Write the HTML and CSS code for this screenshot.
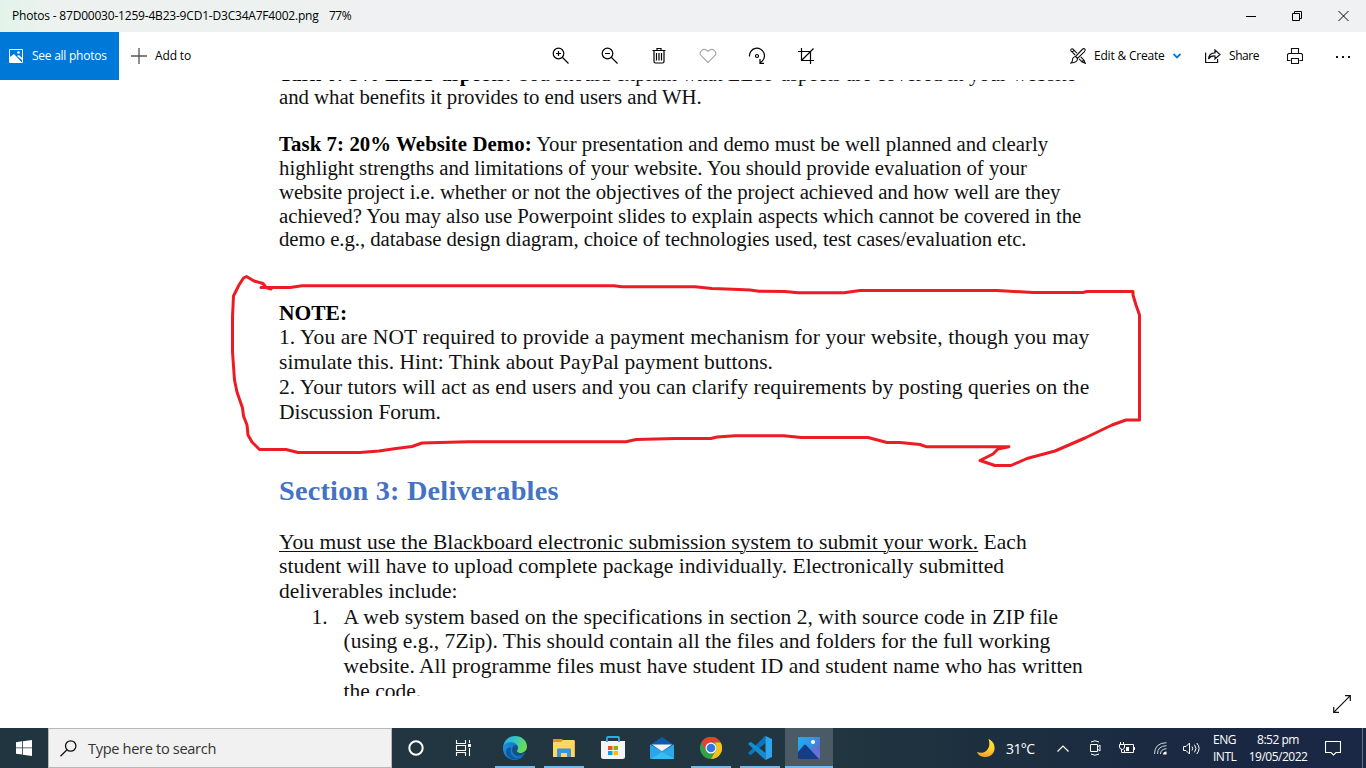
FILE: index.html
```html
<!DOCTYPE html>
<html lang="en">
<head>
<meta charset="utf-8">
<title>Photos</title>
<link rel="stylesheet" href="styles.css">
</head>
<body>
<div class="desktop">
  <header class="titlebar">
    <span class="title name">Photos - 87D00030-1259-4B23-9CD1-D3C34A7F4002.png</span>
    <span class="title pct">77%</span>
    <svg class="winctl" width="138" height="32" viewBox="0 0 138 32" fill="none" stroke="#000"><path d="M18 16.500h10"/><path d="M64.500 13.500h7v7h-7zM66.500 13.500v-2h7v7h-2"/><path d="M110.500 11l10 10m0-10l-10 10"/></svg>
  </header>
  <nav class="toolbar">
    <div class="all">
      <svg width="14" height="14" viewBox="0 0 14 14"><path d="M.5.5h13v13H.5z" fill="none" stroke="#fff"/><path d="M1 8l4-3 8 8.500H1z" fill="#fff"/><path d="M8 7l2-1 3 3v2z" fill="#fff"/><circle cx="9.500" cy="3.500" r="1.300" fill="#fff"/></svg>
      <span class="ui seeall">See all photos</span>
    </div>
    <div class="add">
      <svg width="16" height="16" viewBox="0 0 16 16" stroke="#555" stroke-width="1.300"><path d="M0 8h16M8 0v16"/></svg>
      <span class="ui addto">Add to</span>
    </div>
    <div class="tools">
      <svg viewBox="0 0 18 18"><circle cx="6.500" cy="6.500" r="5.300"/><path d="M4 6.500h5M6.500 4v5M10.500 10.500l6 6"/></svg>
      <svg viewBox="0 0 18 18"><circle cx="6.500" cy="6.500" r="5.300"/><path d="M4 6.500h5M10.500 10.500l6 6"/></svg>
      <svg viewBox="0 0 18 18"><path d="M2.500 3.500h13M4 3.500v11q0 1.500 1.500 1.500h7q1.500 0 1.500-1.500v-11M7 3.500v-2h4v2M6.500 6v7.500M9 6v7.500M11.500 6v7.500"/></svg>
      <svg viewBox="0 0 18 18" class="dim"><path d="M9 15.500L2.200 8.700C-.6 5.500 3.600-.2 9 4.200c5.400-4.400 9.600 1.300 6.800 4.500z"/></svg>
      <svg viewBox="0 0 18 18"><path d="M1.500 9.500a7.500 7.500 0 1 1 10.700 6M12 12v4.300h4" /><circle cx="9" cy="9" r="1.500"/></svg>
      <svg viewBox="0 0 18 18"><path d="M1 4.500h12.500V17M4.500 1v12.500H17M4.500 13.500L16.500 1.500"/></svg>
    </div>
    <div class="right">
      <svg class="edit-i" width="16" height="16" viewBox="0 0 16 16" fill="none" stroke="#111" stroke-width="1.100"><path d="M5.200 7L1 2.800Q.5 2 1.200 1.200 2 .5 2.800 1L7 5.200M10.800 9L14 12.200l1.300 3.100-3.100-1.300L9 10.800M2.200 4.200l2-2M11.500 14l2.500-2"/><path d="M14.500.8q1.500 1-.3 3L7.500 10.500l-2-2 6.700-7q1.300-1.300 2.300-.7zM5.500 8.500l2 2q.3 4-6.500 4.500 2-2 1.500-4 1-2.500 3-2.500z"/></svg>
      <span class="ui editc">Edit &amp; Create</span>
      <svg class="chev" width="8" height="6" viewBox="0 0 8 6" fill="none" stroke="#0078d7" stroke-width="1.800"><path d="M.5 1L4 4.500 7.500 1"/></svg>
      <svg class="share-i" width="16" height="14" viewBox="0 0 16 14" fill="none" stroke="#111" stroke-width="1.200"><path d="M.6 3.500v10h12V10M3.500 10q.5-6.200 6.500-6.200V1l5 4.500-5 4.500V7Q5.500 6.700 3.500 10z"/></svg>
      <span class="ui share">Share</span>
      <svg class="print-i" width="16" height="16" viewBox="0 0 16 16" fill="none" stroke="#111" stroke-width="1.100"><path d="M4.500 5.500v-5h7v5M3.500 12.500h-3v-6l1-1h13l1 1v6h-3M4.500 10.500h7v5h-7z"/></svg>
      <svg class="more" width="14" height="2" viewBox="0 0 14 2"><path d="M0 0h2v2H0zM6 0h2v2H6zM12 0h2v2h-2z" fill="#111"/></svg>
    </div>
  </nav>
  <main class="viewer">
    <article class="doc">
      <p class="a cut"><b>Task 6: 5% LESP aspects:</b> You should explain what LESP aspects are covered in your website</p>
      <p class="a l1">and what benefits it provides to end users and WH.</p>
      <p class="a l2 gap"><b>Task 7: 20% Website Demo:</b> Your presentation and demo must be well planned and clearly</p>
      <p class="a l3">highlight strengths and limitations of your website. You should provide evaluation of your</p>
      <p class="a l4">website project i.e. whether or not the objectives of the project achieved and how well are they</p>
      <p class="a l5">achieved? You may also use Powerpoint slides to explain aspects which cannot be covered in the</p>
      <p class="a l6">demo e.g., database design diagram, choice of technologies used, test cases/evaluation etc.</p>
      <section class="note">
        <p class="b"><b>NOTE:</b></p>
        <p class="b n1">1. You are NOT required to provide a payment mechanism for your website, though you may</p>
        <p class="b n2">simulate this. Hint: Think about PayPal payment buttons.</p>
        <p class="b n3">2. Your tutors will act as end users and you can clarify requirements by posting queries on the</p>
        <p class="b n4">Discussion Forum.</p>
      </section>
      <h1>Section 3: Deliverables</h1>
      <p class="b d1"><u>You must use the Blackboard electronic submission system to submit your work.</u> Each</p>
      <p class="b d2">student will have to upload complete package individually. Electronically submitted</p>
      <p class="b d3">deliverables include:</p>
      <div class="item"><span class="b num">1.</span><div>
        <p class="b i1">A web system based on the specifications in section 2, with source code in ZIP file</p>
        <p class="b i2">(using e.g., 7Zip). This should contain all the files and folders for the full working</p>
        <p class="b i3">website. All programme files must have student ID and student name who has written</p>
        <p class="b i4">the code.</p>
      </div></div>
    </article>
    <svg class="ink" width="920" height="200" viewBox="225 270 920 200" fill="none" stroke="#ed1c24" stroke-width="3" stroke-linejoin="round" stroke-linecap="round"><path d="M261 287.500H290L302 285.800H614L622 286.700H695L712 288.500 733 289.300 750 290 759 291.300 785 291.500 798 292.700H844L860 290.500H997L1033 292.500H1083L1087 291.500H1133V295L1136 305 1139.500 315V420H1126L1112 425 1085 438 1055 451 1027 458.500 1011 465.500H995L980 460.500 993 454 998 449 1009 446.700H926L920 444.500 900 442.500H887L868 437.500H801L784 435.700H735L717 437 711 438.500H675L636 439.500 626 441.700H468L422 443 412 446.500 396 448.500 379 451 360 452.500H298L286 449.500H259.500L252 442 248 435 247 425 243.500 416 242.500 408 237 392 234.500 380 232.500 352V317L233.500 296 239 285 243.500 278 246.500 276.500 254 281 263 283.500 266 287.500 271 289"/></svg>
    <svg class="expand" width="18" height="18" viewBox="0 0 18 18" fill="none" stroke="#111" stroke-width="1.200"><path d="M.7 17.300L17.300.7M.7 12v5.300H6M12 .7h5.300V6"/></svg>
  </main>
  <footer class="taskbar">
    <div class="cell start"><svg width="16" height="16" viewBox="0 0 16 16" fill="#fff"><path d="M0 2.200l6-.9v6.200H0zM6.800 1.200L16 0v7.500H6.800zM0 8.300h6v6.300l-6-.9zM6.800 8.300H16V16l-9.200-1.300z"/></svg></div>
    <div class="search"><svg width="17" height="17" viewBox="0 0 17 17" fill="none" stroke="#111" stroke-width="1.300"><circle cx="10.700" cy="6" r="5.200"/><path d="M7 9.700L.5 16.200"/></svg><span class="typed">Type here to search</span></div>
    <div class="cell"><svg width="16" height="16" viewBox="0 0 16 16" fill="none" stroke="#fff" stroke-width="2"><circle cx="8" cy="8" r="6.700"/></svg></div>
    <div class="cell view"><svg width="17" height="16" viewBox="0 0 17 16" fill="none" stroke="#fff" stroke-width="1.100"><path d="M1.500 0v3.500h9V0M1.500 5.500h9v5h-9zM1.500 16v-3.500h9V16M14.500 0v3M14.500 8v8"/><path d="M13 4h3v3h-3z" fill="#fff" stroke="none"/></svg></div>
    <div class="app run"><svg width="24" height="24" viewBox="0 0 24 24"><defs><linearGradient id="eg" x1="0" x2="1" y1="0" y2=".3"><stop offset="0" stop-color="#2aa8e8"/><stop offset=".5" stop-color="#30c5c8"/><stop offset="1" stop-color="#69dc56"/></linearGradient><linearGradient id="eb" x1="0" x2="1"><stop offset="0" stop-color="#1b8ee0"/><stop offset="1" stop-color="#1263ae"/></linearGradient></defs><path d="M0 11C1 4 6 0 12 0c7 0 12 5 12 10.500 0 4-3 6.500-7 6.500-3 0-4.500-1-3-2.500C17 10 9 4 0 11z" fill="url(#eg)"/><path d="M0 12C1 4 14 5 15 11c.3 2-1.700 3-1 4.500 1 2.500 5.500 2.500 8.500 1C20 21.500 16 24 12 24 5 24 0 19 0 12z" fill="url(#eb)"/><path d="M8 12c-2 7 4 12 10 10-8 4-16-1-15-7 .5-3 3-4.500 5-3z" fill="#0c59a4"/><path d="M9 14c0-3 2-4.500 4-5 2.500 1.500 2 4 1 5-1 2.500 3 4.500 8 2.500-3 4.500-12 5-13-2.500z" fill="#174f83"/></svg></div>
    <div class="app run"><svg width="22" height="18" viewBox="0 0 22 18"><path d="M0 0h9l1.500 2H22v16H0z" fill="#d99a15"/><path d="M0 3h8l2-2h11.500V18H0z" fill="#ffd765"/><path d="M4 18V10.500q0-1 1-1h12q1 0 1 1V18h-4v-4H8v4z" fill="#3b93dc"/></svg></div>
    <div class="app"><svg width="24" height="24" viewBox="0 0 24 24"><path d="M0 5h24v15.500q0 2.500-2.500 2.500h-19Q0 23 0 20.500z" fill="#f5f5f5"/><path d="M6 6V2q0-1 1-1h10q1 0 1 1v4" fill="none" stroke="#21b1ee" stroke-width="1.800"/><path d="M7 10h4.500v4H7z" fill="#f25022"/><path d="M12.500 10H17v4h-4.500z" fill="#7fba00"/><path d="M7 15h4.500v4H7z" fill="#00a4ef"/><path d="M12.500 15H17v4h-4.500z" fill="#ffb900"/></svg></div>
    <div class="app"><svg width="24" height="22" viewBox="0 0 24 22"><path d="M0 8l12-8 12 8-12 8z" fill="#0f5aae"/><path d="M2 7.500h20l-10 7z" fill="#f4f4f4"/><path d="M0 7.500l24 13.500q0 1-1 1H1q-1 0-1-1z" fill="#28a8ea"/><path d="M24 7.500V21q0 1-1 1H1z" fill="#35c0f4"/><path d="M11 14.500L23.700 21.500 24 7.500z" fill="#1c91dd" opacity=".5"/></svg></div>
    <div class="app run"><svg width="22" height="22" viewBox="0 0 22 22"><circle cx="11" cy="11" r="11" fill="#34a047"/><path d="M1.400 5.500A11 11 0 0 1 20.600 5.500H11L6.200 13.700z" fill="#e8402f"/><path d="M20.600 5.500A11 11 0 0 1 11 22l5-8.500q1.500-4-1-8z" fill="#fbc116"/><circle cx="11" cy="11" r="5.500" fill="#fff"/><circle cx="11" cy="11" r="4.300" fill="#3378e2"/></svg></div>
    <div class="app run"><svg width="24" height="24" viewBox="0 0 24 24"><path d="M17.500 0v7L3 19l-1.500-.5L0 17l17-17z" fill="#0877bc"/><path d="M17.500 24v-7L3 6l-1.500.5L0 8l17.500 16z" fill="#138cd2"/><path d="M17.500 0L24 3v18l-6.500 3z" fill="#2ca7ee"/></svg></div>
    <div class="app run active"><svg width="22" height="22" viewBox="0 0 22 22"><defs><linearGradient id="ph" x2="1" y2=".6"><stop offset="0" stop-color="#20b0ef"/><stop offset=".6" stop-color="#3094e2"/><stop offset="1" stop-color="#6b62cc"/></linearGradient></defs><rect width="22" height="22" rx="1" fill="url(#ph)"/><path d="M12 13l3-3q1-1 2 0l5 5v6L20 22z" fill="#6772d2"/><path d="M0 15l6-7q1-1 2 0l13 14H1q-1 0-1-1z" fill="#133e86"/><circle cx="15" cy="5" r="2" fill="#fff"/></svg></div>
    <div class="tray">
      <svg class="moon" width="18" height="18" viewBox="0 0 18 18"><defs><linearGradient id="mn" x2="0" y2="1"><stop offset="0" stop-color="#ffe438"/><stop offset=".6" stop-color="#ffd02c"/><stop offset="1" stop-color="#f89a22"/></linearGradient></defs><path d="M11.500 0C21 4 19 18 8.500 18 4.500 18 1 16 0 13c7 3 15-3 11.500-13z" fill="url(#mn)"/></svg>
      <span class="temp">31°C</span>
      <svg class="up" width="12" height="7" viewBox="0 0 12 7" fill="none" stroke="#fff" stroke-width="1.200"><path d="M.5 6.500L6 1l5.500 5.500"/></svg>
      <svg class="cam" width="12" height="16" viewBox="0 0 12 16" fill="none" stroke="#fff"><path d="M1.500 4.500h7v7h-7zM8.500 7l2.500-2v6L8.500 9M2 2q4-2.500 8 0M2 14q4 2.500 8 0"/></svg>
      <svg class="bat" width="16" height="12" viewBox="0 0 16 12" fill="none" stroke="#fff"><path d="M6 2.500h8.500v8H5.500V8M2.500 7v3.500h3M.5 2.500h5V5q0 2-2 2.500-3-.5-3-2.500zM1.500 0v2M4.500 0v2M15.500 5v3"/><path d="M7 5h3v4H7z" fill="#fff" stroke="none"/></svg>
      <svg class="wifi" width="13" height="13" viewBox="0 0 13 13" fill="none" stroke="#cfd5dc"><path d="M.5 12Q.5 1 12.500.7M3.500 12Q3.500 4 12.500 3.700M6.500 12Q6.500 7 12.500 6.700" /><path d="M9 12.500q.3-3 3.500-3v3z" fill="#fff" stroke="none"/></svg>
      <svg class="vol" width="17" height="13" viewBox="0 0 17 13" fill="none" stroke="#fff"><path d="M.5 4.500H3l3.500-3.500v11L3 8.500H.5zM9 4.500q1.500 2 0 4M11.500 2.700q3 3.800 0 7.600M13.800 1q4.500 5.500 0 11"/></svg>
      <div class="lang"><span>ENG</span><span>INTL</span></div>
      <div class="clock"><span class="time">8:52 pm</span><span class="date">19/05/2022</span></div>
      <svg class="notif" width="16" height="16" viewBox="0 0 16 16" fill="none" stroke="#fff" stroke-width="1.100"><path d="M.5 1.500h15v11H11L8.500 15 6 12.500H.5z"/></svg>
      <i class="peek"></i>
    </div>
  </footer>
</div>
</body>
</html>
```
FILE: styles.css
```css
* { box-sizing: border-box; }
body, p, h1 { margin: 0; }
body { background: #fff; font-family: "Open Sans", "Noto Sans", sans-serif; overflow: hidden; }
svg { display: block; flex: none; }
.desktop { width: 1366px; height: 768px; display: flex; flex-direction: column; }
.titlebar { height: 32px; flex: none; display: flex; align-items: center; padding-left: 12px; background: linear-gradient(90deg, #e3f3ea 0, #edf2f0 60px, #edf1ef 300px, #f0f1f3 420px); }
.title, .ui { font-size: 12px; line-height: 16px; white-space: nowrap; color: #000; }
.title { height: 16px; }
.name { width: 317px; letter-spacing: -.2px; }
.pct { letter-spacing: -.5px; }
.winctl { margin-left: auto; }
.toolbar { height: 48px; flex: none; display: flex; align-items: center; position: relative; background: #fff; }
.all { width: 119px; height: 48px; background: #0078d7; display: flex; align-items: center; padding-left: 9px; gap: 9px; }
.seeall { color: #fff; letter-spacing: -.25px; }
.add { display: flex; align-items: center; gap: 8px; margin-left: 12px; width: 421px; }
.addto { letter-spacing: -.15px; }
.tools { display: flex; gap: 31px; }
.tools svg { width: 18px; height: 18px; fill: none; stroke: #000; stroke-width: 1.200; }
.tools .dim { stroke: #aaa; }
.right { position: relative; margin-left: auto; width: 296px; display: flex; align-items: center; }
.editc { width: 71px; margin-left: 8px; letter-spacing: -.2px; }
.chev { margin-left: 8px; }
.share-i { margin-left: 24px; }
.share { width: 31px; margin-left: 8px; letter-spacing: -.45px; }
.print-i { margin-left: 27px; }
.more { margin-left: 33px; margin-top: 2px; }
.viewer { position: relative; height: 648px; flex: none; }
.doc { height: 616px; overflow: hidden; padding-left: 279px; font-family: "Liberation Serif", serif; color: #111; }
.doc p, .doc h1, .num { white-space: nowrap; }
.doc b { color: #000; }
.a { font-size: 20.800px; line-height: 23.800px; height: 23.800px; }
.b { font-size: 21.500px; line-height: 24.800px; height: 24.800px; }
.cut { margin-top: -18.200px; }
.cut + .l1 { margin-top: -1px; }
.gap { margin-top: 23.800px; }
.l1 { letter-spacing: -.04px; }
.l2 { letter-spacing: -.03px; }
.l2 b { letter-spacing: .08px; }
.l3 { letter-spacing: -.02px; }
.l4 { letter-spacing: -.065px; }
.l5 { letter-spacing: -.03px; }
.l6 { letter-spacing: -.055px; }
.note { margin-top: 49.500px; }
.n1 { letter-spacing: .11px; }
.n2 { letter-spacing: .03px; }
.n3 { letter-spacing: .05px; }
.n4 { letter-spacing: -.03px; }
h1 { color: #4472c4; font-size: 28.300px; letter-spacing: .2px; line-height: 32px; margin-top: 50px; margin-bottom: 23px; }
.d1 { letter-spacing: .05px; }
.d2 { letter-spacing: .035px; }
.d3 { letter-spacing: 0; }
.doc u { text-decoration-thickness: 1px; text-underline-offset: 2px; }
.item { display: flex; margin-top: .5px; }
.i1 { letter-spacing: .045px; }
.i2 { letter-spacing: .015px; }
.i3 { letter-spacing: .03px; }
.num { width: 64.500px; padding-left: 32.500px; }
.ink { position: absolute; left: 225px; top: 190px; }
.expand { position: absolute; left: 1333px; top: 615px; }
.taskbar { height: 40px; display: flex; background: linear-gradient(90deg, #20353f 0, #213640 830px, #1d303f 960px, #1a2743 1250px, #1a2845 100%); color: #fff; }
.cell { width: 48px; display: flex; align-items: center; justify-content: center; }
.view { width: 50px; }
.view svg { margin-right: 3px; }
.search { width: 344px; height: 40px; display: flex; align-items: center; gap: 11px; padding-left: 11px; background: #f1f1f1; border: 1px solid #b8b8b8; }
.typed { font-size: 14.600px; color: #333; letter-spacing: -.33px; }
.app { width: 49px; display: flex; align-items: center; justify-content: center; position: relative; }
.run::after { content: ""; position: absolute; bottom: 0; left: 5px; width: 40px; height: 2px; background: #76b9ed; }
.active { width: 48px; margin-left: 1px; background: #4b5b65; }
.active::after { left: 0; width: 48px; }
.tray { margin-left: auto; display: flex; align-items: center; width: 389px; }
.temp { width: 30px; margin-left: 11px; font-size: 14px; letter-spacing: -.6px; }
.up { margin-left: 21px; }
.cam { margin-left: 20px; }
.bat { margin-left: 18px; }
.wifi { margin-left: 19px; }
.vol { margin-left: 16px; }
.lang, .clock { display: flex; flex-direction: column; font-size: 12px; line-height: 17px; letter-spacing: -.5px; white-space: nowrap; }
.lang { width: 24px; margin-left: 13px; }
.clock { width: 58px; margin-left: 12px; align-items: center; }
.notif { margin-left: 18px; }
.peek { width: 1px; height: 40px; background: #66717f; margin-left: 21px; }
```
